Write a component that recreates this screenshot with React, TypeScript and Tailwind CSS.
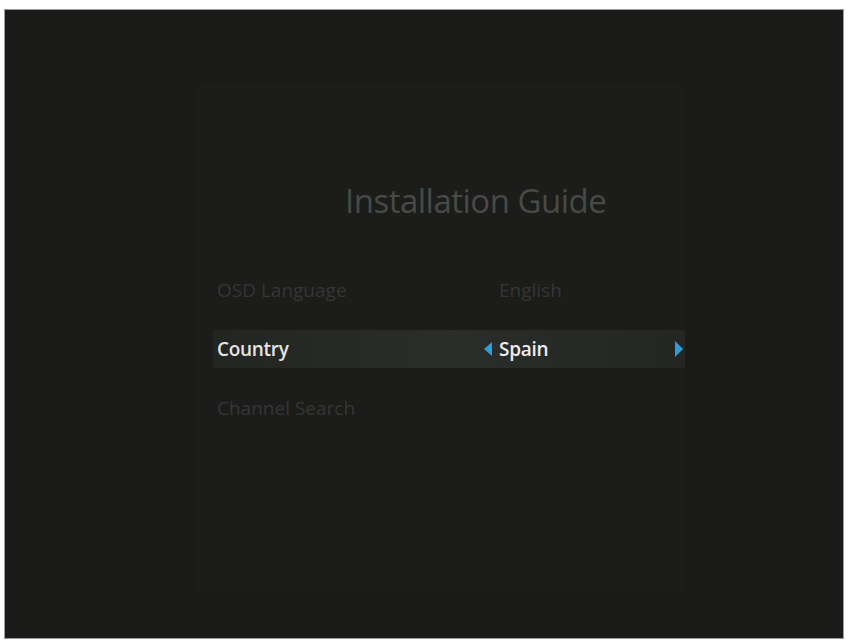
import React from "react";

export default function App() {
  return (
    <div className="w-[848px] h-[642px] bg-white pt-[9px] pl-[4px]" style={{ fontFamily: '"Open Sans", "DejaVu Sans", sans-serif' }}>
      <div className="w-[840px] h-[630px] bg-[#1a1a19] border border-[#9a9a9a] pt-[76px] pl-[190px]">
        <div className="w-[490px] h-[505px] bg-[#1c1c1b] flex flex-col">
          <div className="h-[100px] pt-[93px] pl-[150px] text-[#474a47] text-[33px] tracking-[-0.5px] leading-[44px] whitespace-nowrap box-content">Installation Guide</div>
          <div className="pl-[18px] flex flex-col gap-[21px] mt-[-8px]">
            <div className="h-[38px] flex items-center text-[#353735] text-[19px]">
              <span className="w-[286px] pl-[4px]">OSD Language</span>
              <span>English</span>
            </div>
            <div className="h-[38px] flex items-center text-[19px] bg-gradient-to-r from-[#222522] via-[#2b2d2a] to-[#242624] rounded-[2px]">
              <span className="w-[270px] pl-[4px] text-[#e4e4e4] font-semibold tracking-[-0.3px]">Country</span>
              <svg width="10" height="14" viewBox="0 0 10 14" className="mr-[6px]"><path d="M9 0 L1 7 L9 14 Z" fill="#2d9fd6" /></svg>
              <span className="text-[#ececec] font-semibold tracking-[-0.3px] flex-1">Spain</span>
              <svg width="10" height="16" viewBox="0 0 10 16" className="mr-[1px]"><path d="M1 0 L9 8 L1 16 Z" fill="#2d9fd6" /></svg>
            </div>
            <div className="h-[38px] flex items-center text-[#353735] text-[19px]">
              <span className="pl-[4px]">Channel Search</span>
            </div>
          </div>
        </div>
      </div>
    </div>
  );
}
